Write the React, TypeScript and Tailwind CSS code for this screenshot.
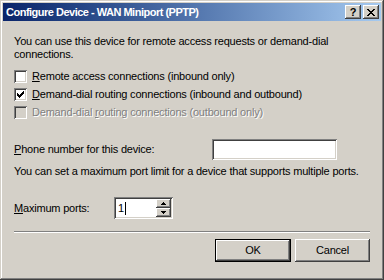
import React from 'react';

const raised =
  'shadow-[inset_-1px_-1px_#404040,inset_1px_1px_#ffffff,inset_-2px_-2px_#808080,inset_2px_2px_#d4d0c8]';
const sunken =
  'shadow-[inset_1px_1px_#808080,inset_-1px_-1px_#ffffff,inset_2px_2px_#404040,inset_-2px_-2px_#d4d0c8]';

function Pixels({ rows, w, h, color = '#000' }: { rows: string[]; w: number; h: number; color?: string }) {
  return (
    <svg width={w} height={h} viewBox={`0 0 ${w} ${h}`} shapeRendering="crispEdges">
      {rows.flatMap((row, y) =>
        row.split('').map((c, x) => (c === 'X' ? <rect key={`${x}-${y}`} x={x} y={y} width={1} height={1} fill={color} /> : null))
      )}
    </svg>
  );
}

const CHECK = ['......X', '.....XX', 'X...XXX', 'XX.XXX.', 'XXXXX..', '.XXX...', '..X....'];
const CLOSE = ['XX....XX', '.XX..XX.', '..XXXX..', '...XX...', '..XXXX..', '.XX..XX.', 'XX....XX'];
const UP = ['..X..', '.XXX.', 'XXXXX'];
const DOWN = ['XXXXX', '.XXX.', '..X..'];

// Checkbox row, classic style
function Check({ checked, disabled, children }: { checked?: boolean; disabled?: boolean; children: React.ReactNode }) {
  return (
    <div className="flex items-center h-[18px]">
      <div className={`w-[13px] h-[13px] flex items-center justify-center ${sunken} ${disabled ? 'bg-[#d4d0c8]' : 'bg-white'}`}>
        {checked && <Pixels rows={CHECK} w={7} h={7} />}
      </div>
      <span className={`ml-[5px] ${disabled ? 'text-[#808080] [text-shadow:1px_1px_#ffffff]' : ''}`}>{children}</span>
    </div>
  );
}

function Btn({ children, def }: { children: React.ReactNode; def?: boolean }) {
  if (def) {
    return (
      <div className="w-[76px] h-[23px] border border-black">
        <div className={`w-full h-full flex items-center justify-center ${raised}`}>{children}</div>
      </div>
    );
  }
  return <div className={`w-[75px] h-[23px] flex items-center justify-center ${raised}`}>{children}</div>;
}

export default function App() {
  return (
    <div
      className={`w-[384px] h-[280px] bg-[#d4d0c8] p-[3px] text-[11px] leading-[13px] tracking-[-0.2px] text-black shadow-[inset_-1px_-1px_#404040,inset_1px_1px_#d4d0c8,inset_-2px_-2px_#808080,inset_2px_2px_#ffffff]`}
      style={{ fontFamily: '"Liberation Sans", Arial, sans-serif' }}
    >
      {/* Title bar */}
      <div className="h-[18px] flex items-center pl-[3px] pr-[2px] bg-gradient-to-r from-[#0a246a] to-[#a6caf0]">
        <span className="flex-1 text-white font-bold text-[11px] tracking-[-0.5px]">Configure Device - WAN Miniport (PPTP)</span>
        <div className={`w-[16px] h-[14px] flex items-center justify-center bg-[#d4d0c8] font-bold text-[11px] ${raised}`}>?</div>
        <div className={`ml-[2px] w-[16px] h-[14px] flex items-center justify-center bg-[#d4d0c8] ${raised}`}>
          <Pixels rows={CLOSE} w={8} h={7} />
        </div>
      </div>

      {/* Body */}
      <div className="pl-[11px] pr-[10px] pt-[14px] flex flex-col">
        <p className="w-[330px]">You can use this device for remote access requests or demand-dial connections.</p>

        <div className="mt-[6px] flex flex-col">
          <Check>
            <u>R</u>emote access connections (inbound only)
          </Check>
          <Check checked>
            <u>D</u>emand-dial routing connections (inbound and outbound)
          </Check>
          <Check disabled>
            Demand-dial <u>r</u>outing connections (outbound only)
          </Check>
        </div>

        <div className="mt-[18px] flex items-center">
          <span className="w-[198px]">
            <u>P</u>hone number for this device:
          </span>
          <div className={`w-[125px] h-[21px] bg-white ${sunken}`} />
        </div>

        <p className="mt-[5px] whitespace-nowrap">You can set a maximum port limit for a device that supports multiple ports.</p>

        <div className="mt-[19px] flex items-center">
          <span className="w-[100px]">
            <u>M</u>aximum ports:
          </span>
          <div className={`w-[59px] h-[22px] bg-white flex items-center p-[2px] ${sunken}`}>
            <span className="flex-1 pl-[2px] flex items-center">
              1<span className="w-px h-[13px] bg-black ml-px" />
            </span>
            <div className="flex flex-col w-[15px] h-[18px]">
              <div className={`flex-1 flex items-center justify-center bg-[#d4d0c8] ${raised}`}>
                <Pixels rows={UP} w={5} h={3} />
              </div>
              <div className={`flex-1 flex items-center justify-center bg-[#d4d0c8] ${raised}`}>
                <Pixels rows={DOWN} w={5} h={3} />
              </div>
            </div>
          </div>
        </div>

        <div className="mt-[12px] mr-[1px] h-[2px] border-t border-[#808080] border-b-white border-b" />

        <div className="mt-[6px] flex justify-end gap-[4px] pr-[1px]">
          <Btn def>OK</Btn>
          <Btn>Cancel</Btn>
        </div>
      </div>
    </div>
  );
}
